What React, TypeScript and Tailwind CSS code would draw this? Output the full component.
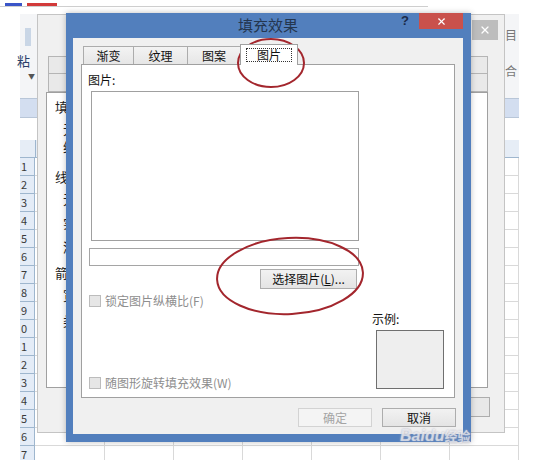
import { X } from 'lucide-react'

const cjk = "font-['Noto_Sans_CJK_SC','Noto_Sans',sans-serif]"

const rowDigits = Array.from({ length: 17 }, (_, i) => (i + 1) % 10)
const cols = [0, 1, 2, 3, 4, 5, 6]

const Sheet = () => {
	return (
		<div className="flex flex-col">
			<div className="flex h-[18px] border-b border-[#9eb6ce] bg-[#e6edf6]">
				<div className="w-[16px] border-r border-[#9eb6ce]" />
				<div className="flex-1" />
			</div>
			{rowDigits.map((d, i) => (
				<div key={i} className="flex h-[18px]">
					<div className="w-[16px] border-b border-r border-[#9eb6ce] bg-[#e4ecf7] pl-[1px] text-[11px] leading-[17px] text-[#3a3a3a]">
						{d}
					</div>
					{cols.map((c) => (
						<div key={c} className="w-[72px] border-b border-r border-[#d9d9d9]" />
					))}
				</div>
			))}
		</div>
	)
}

const BackDialog = () => {
	return (
		<div className="absolute left-[37px] top-[14px] flex h-[419px] w-[468px] flex-col border border-[#c4c4c4] bg-[#f0f0f0]">
			<div className="flex h-[33px] justify-end pr-[6px] pt-[5px]">
				<div className="flex h-[20px] w-[26px] items-center justify-center bg-[#bdbdbd]">
					<X className="h-[12px] w-[12px] text-white" strokeWidth={2.5} />
				</div>
			</div>
			<div className="ml-[10px] mt-[8px] flex h-[36px] w-[440px] flex-col border border-[#b5b5b5] bg-[#e9e9e9]">
				<div className="h-[17px] border-b border-[#b5b5b5]" />
			</div>
			<div className="ml-[8px] flex h-[296px] w-[442px] flex-col border border-[#a0a0a0] bg-white pl-[8px] pt-[7px] text-[13px] leading-[14px] text-[#222]">
				<span>填充</span>
				<span className="ml-[8px] mt-[8px]">无填充(N)</span>
				<span className="ml-[8px] mt-[4px]">纯色填充(S)</span>
				<span className="mt-[16px]">线条</span>
				<span className="ml-[8px] mt-[8px]">无线条(N)</span>
				<span className="ml-[8px] mt-[10px]">实线(S)</span>
				<span className="ml-[8px] mt-[10px]">渐变线(G)</span>
				<span className="mt-[12px]">箭头</span>
				<span className="ml-[8px] mt-[8px]">宽度</span>
				<span className="ml-[8px] mt-[12px]">类型</span>
			</div>
			<div className="ml-[362px] mt-[9px] h-[20px] w-[90px] border border-[#adadad] bg-[#e8e8e8]" />
		</div>
	)
}

const Tab = ({ label, w, active }: { label: string; w: number; active?: boolean }) => {
	if (active) {
		return (
			<div
				className="relative z-10 -mb-px -ml-px flex h-[21px] items-center justify-center border border-b-0 border-[#a0a0a0] bg-white"
				style={{ width: w }}
			>
				<span className="border border-dotted border-[#333] px-[10px] leading-[12px]">{label}</span>
			</div>
		)
	}
	return (
		<div
			className="-ml-px flex h-[18px] items-center justify-center border border-b-0 border-[#acacac] bg-[linear-gradient(#f3f3f3,#e6e6e6)]"
			style={{ width: w }}
		>
			{label}
		</div>
	)
}

const CheckRow = ({ label }: { label: string }) => (
	<div className="flex items-center gap-[4px]">
		<div className="h-[12px] w-[12px] border border-[#bcbcbc] bg-[#e6e6e6]" />
		<span className="text-[12px] leading-[12px] text-[#8e8e8e]">{label}</span>
	</div>
)

const FillDialog = () => {
	return (
		<div className="absolute left-[66px] top-[13px] flex h-[429px] w-[405px] flex-col bg-[#527fbd] shadow-[0_0_6px_rgba(0,0,0,0.25)]">
			<div className="flex h-[25px] items-start">
				<span className="ml-[172px] mt-[2px] text-[15px] leading-[20px] text-[#24364f]">填充效果</span>
				<span className="ml-auto mr-[10px] mt-[1px] font-['Liberation_Sans',sans-serif] text-[13px] font-bold leading-[14px] text-[#1b2a48]">
					?
				</span>
				<div className="mr-[8px] flex h-[16px] w-[44px] items-center justify-center bg-[#c9514c]">
					<X className="h-[11px] w-[11px] text-white" strokeWidth={2.5} />
				</div>
			</div>
			<div className="mb-[8px] ml-[7px] mr-[8px] flex flex-1 flex-col bg-[#f0f0f0] pl-[8px] pt-[6px] text-[12px] text-[#111]">
				<div className="flex h-[20px] items-end pl-[3px]">
					<Tab label="渐变" w={51} />
					<Tab label="纹理" w={55} />
					<Tab label="图案" w={54} />
					<Tab label="图片" w={58} active />
				</div>
				<div className="flex h-[334px] w-[374px] flex-col border border-[#a0a0a0] bg-white pt-[9px]">
					<span className="ml-[6px] leading-[12px]">图片:</span>
					<div className="ml-[9px] mt-[5px] h-[150px] w-[268px] border border-[#a0a0a0] bg-white" />
					<div className="ml-[7px] mt-[7px] h-[18px] w-[270px] border border-[#a5a5a5] bg-white" />
					<div className="ml-[178px] mt-[3px] flex h-[20px] w-[97px] items-center justify-center border border-[#adadad] bg-[linear-gradient(#f2f2f2,#e4e4e4)] leading-[12px]">
						选择图片(<span className="underline">L</span>)...
					</div>
					<div className="ml-[7px] mt-[6px]">
						<CheckRow label="锁定图片纵横比(F)" />
					</div>
					<div className="mt-[6px] flex items-end">
						<div className="w-[290px] pl-[7px]">
							<CheckRow label="随图形旋转填充效果(W)" />
						</div>
						<div className="flex flex-col">
							<span className="leading-[12px]">示例:</span>
							<div className="ml-[4px] mt-[5px] h-[59px] w-[68px] border border-[#6f6f6f] bg-[#eeeeee]" />
						</div>
					</div>
				</div>
				<div className="mt-[10px] flex gap-[10px] pl-[217px]">
					<div className="flex h-[19px] w-[74px] items-center justify-center border border-[#d3d3d3] bg-[#f4f4f4] text-[#a4a4a4]">
						确定
					</div>
					<div className="flex h-[19px] w-[74px] items-center justify-center border border-[#adadad] bg-[linear-gradient(#f2f2f2,#e4e4e4)]">
						取消
					</div>
				</div>
			</div>
		</div>
	)
}

export default function App() {
	return (
		<div className={`relative h-[460px] w-[538px] overflow-hidden bg-white ${cjk}`}>
			<div className="flex h-[14px] flex-col">
				<div className="flex h-[6px] items-end gap-[5px] pl-[5px]">
					<div className="h-[3px] w-[17px] bg-[#3a55c8]" />
					<div className="h-[3px] w-[30px] bg-[#d23a3a]" />
				</div>
				<div className="h-px w-[428px] bg-[#cfcfcf]" />
			</div>
			<div className="flex">
				<div className="w-[20px]" />
				<div className="flex w-[499px] flex-col">
					<div className="flex h-[84px] justify-between bg-[#f4f5f7]">
						<div className="flex w-[17px] flex-col">
							<div className="ml-[5px] mt-[14px] h-[18px] w-[6px] bg-[#c9d6e6]" />
							<span className="-ml-[3px] mt-[8px] text-[13px] leading-[14px] text-[#2a3f6a]">粘</span>
							<span className="ml-[8px] mt-[4px] text-[7px] leading-[8px] text-[#555]">▼</span>
						</div>
						<div className="flex w-[14px] flex-col pt-[14px] text-[12px] leading-[14px] text-[#777]">
							<span>目</span>
							<span className="mt-[22px]">合</span>
						</div>
					</div>
					<div className="h-[20px] border-y border-[#b8c6d8] bg-[#d3def0]" />
					<div className="h-[22px]" />
					<Sheet />
				</div>
			</div>
			<BackDialog />
			<FillDialog />
			<div className="pointer-events-none absolute left-[400px] top-[428px] font-['Liberation_Sans',sans-serif] text-[16px] font-bold italic leading-[16px] text-white/60 [text-shadow:0_0_2px_#aab]">
				Baidu<span className={`${cjk} text-[13px] not-italic`}>经验</span>
			</div>
			<svg className="pointer-events-none absolute left-0 top-0" width="538" height="460">
				<ellipse cx="271" cy="63" rx="33" ry="24" fill="none" stroke="#a3262d" strokeWidth="2" />
				<ellipse
					cx="290"
					cy="276"
					rx="73"
					ry="38"
					fill="none"
					stroke="#a3262d"
					strokeWidth="2"
					transform="rotate(-3 290 276)"
				/>
			</svg>
		</div>
	)
}
